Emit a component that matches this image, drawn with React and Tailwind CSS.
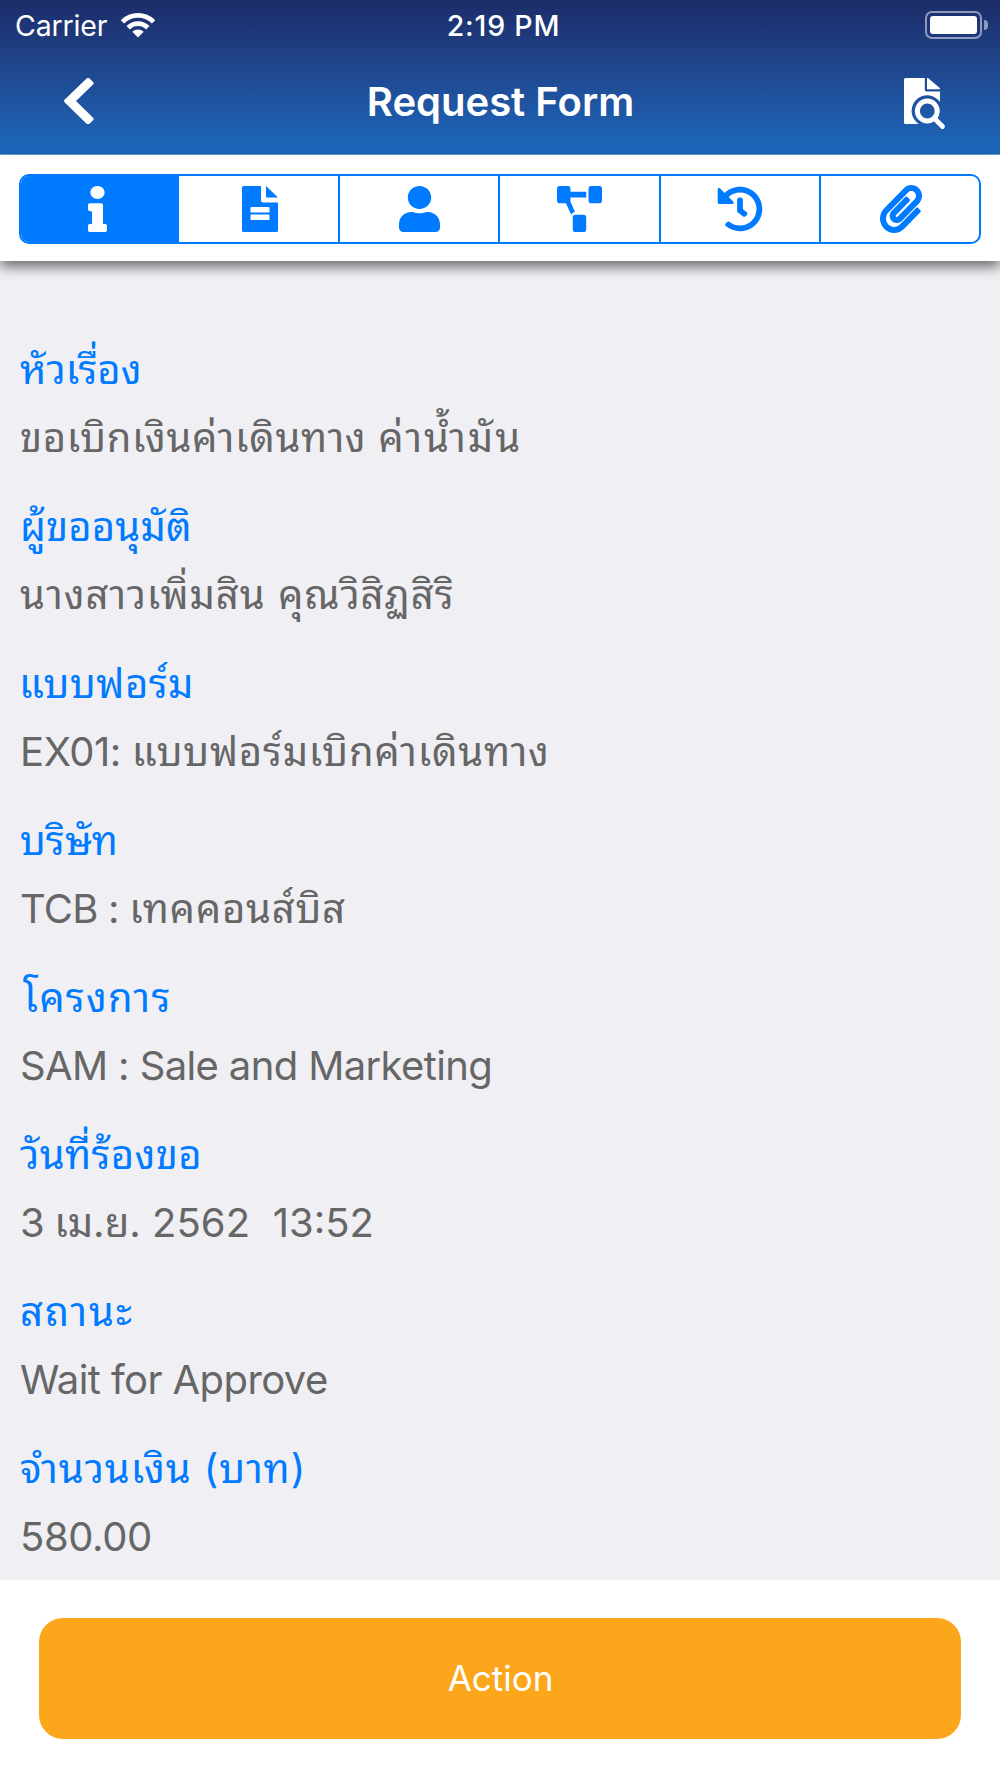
import { FaInfo, FaUser, FaProjectDiagram, FaHistory, FaPaperclip } from "react-icons/fa";

const fields = [
  {
    label: "หัวเรื่อง",
    prefix: "ขอเบิกเงินค่าเดินทาง ",
    prefixSpacing: "tracking-[0.65px]",
    value: "ค่าน้ำมัน",
    spacing: "tracking-[2px]",
  },
  { label: "ผู้ขออนุมัติ", labelSpacing: "tracking-[0.15px]", value: "นางสาวเพิ่มสิน คุณวิสิฏสิริ", spacing: "tracking-[0.95px]" },
  {
    label: "แบบฟอร์ม",
    labelSpacing: "-ml-px tracking-[0.5px]",
    prefix: "EX01: ",
    prefixSpacing: "tracking-[-0.4px]",
    value: "แบบฟอร์มเบิกค่าเดินทาง",
    spacing: "tracking-[0.78px]",
  },
  { label: "บริษัท", prefix: "TCB : ", prefixSpacing: "tracking-[-0.8px]", value: "เทคคอนส์บิส", spacing: "tracking-[0.75px]" },
  { label: "โครงการ", labelSpacing: "pl-[3px] tracking-[1.25px]", value: "SAM : Sale and Marketing", spacing: "tracking-[-0.63px]" },
  {
    label: "วันที่ร้องขอ",
    labelSpacing: "tracking-[0.4px]",
    prefix: "3 ",
    prefixSpacing: "tracking-[-0.9px]",
    value: "เม.ย. 2562  13:52",
    spacing: "tracking-[0.03px] [font-feature-settings:'calt'_1]",
  },
  { label: "สถานะ", labelSpacing: "tracking-[1.8px]", value: "Wait for Approve", spacing: "tracking-[-0.58px]" },
  { label: "จำนวนเงิน (บาท)", labelSpacing: "tracking-[0.9px]", value: "580.00", spacing: "tracking-[-0.4px]" },
];

function DocumentIcon({ className }) {
  return (
    <svg viewBox="0 0 36 46" fill="currentColor" className={className}>
      <path
        fillRule="evenodd"
        d="M1.5 0H19v14a2.5 2.5 0 0 0 2.5 2.5H36v28a1.5 1.5 0 0 1-1.5 1.5h-33A1.5 1.5 0 0 1 0 44.5V1.5A1.5 1.5 0 0 1 1.5 0ZM9.500 21a1 1 0 0 0-1 1v3.500a1 1 0 0 0 1 1h17a1 1 0 0 0 1-1V22a1 1 0 0 0-1-1ZM9.500 28.500a1 1 0 0 0-1 1V33a1 1 0 0 0 1 1h17a1 1 0 0 0 1-1v-3.500a1 1 0 0 0-1-1Z"
      />
      <path d="M24 0 36 11.500H24Z" />
    </svg>
  );
}

function DocumentSearchIcon({ className }) {
  return (
    <svg viewBox="0 0 42 52" fill="currentColor" className={className}>
      <path d="M1.5 0H20.800v11.700A1.800 1.800 0 0 0 22.600 13.500H36V24A15.600 15.600 0 1 0 14.700 46H1.500A1.500 1.500 0 0 1 0 44.500v-43A1.500 1.500 0 0 1 1.500 0Z" />
      <path d="M23 0h1L36 10.300v1H23Z" />
      <circle cx="23.300" cy="33" r="9.900" fill="none" stroke="currentColor" strokeWidth="5" />
      <path d="m31.500 41.500 7 7" stroke="currentColor" strokeWidth="4.800" strokeLinecap="round" />
    </svg>
  );
}

function WifiIcon({ className }) {
  return (
    <svg viewBox="0 0 34 25" fill="none" stroke="currentColor" className={className}>
      <path d="M1.400 8.900a22.100 22.100 0 0 1 31.200 0" strokeWidth="4.800" />
      <path d="M7.200 14.700a13.800 13.800 0 0 1 19.600 0" strokeWidth="4.800" />
      <path d="M11.300 18.800a8 8 0 0 1 11.400 0L17 24.500Z" fill="currentColor" stroke="none" />
    </svg>
  );
}

const tabs = [
  { id: "info", icon: <FaInfo className="h-[46px] w-[19px]" preserveAspectRatio="none" />, width: "w-[158px] pr-[5px]" },
  { id: "document", icon: <DocumentIcon className="h-[46px] w-9" />, width: "w-[159px] pl-[3px]" },
  { id: "user", icon: <FaUser className="h-[46px] w-[41px]" preserveAspectRatio="none" />, width: "w-[160px]" },
  { id: "flow", icon: <FaProjectDiagram className="h-[46px] w-[45px]" preserveAspectRatio="none" />, width: "w-[161px]" },
  { id: "history", icon: <FaHistory className="size-[46px]" />, width: "w-[160px]" },
  { id: "attachment", icon: <FaPaperclip className="h-12 w-[42px]" preserveAspectRatio="none" />, width: "flex-1 pl-0.5" },
];

function StatusBar() {
  return (
    <div className="grid h-[51px] grid-cols-3 items-center pl-[15px] pr-3">
      <div className="flex items-center gap-[14px]">
        <span className="text-[28.5px] leading-[50px] tracking-[-0.15px]">Carrier</span>
        <WifiIcon className="mb-px h-[25px] w-[34px]" />
      </div>
      <span className="pl-1 text-center text-[28.5px] font-medium leading-[50px] tracking-[0.8px]">2:19 PM</span>
      <div className="flex items-center justify-end gap-[2px] pb-[2px]">
        <div className="h-7 w-[57px] rounded-[7px] border-2 border-white/50 p-[3px]">
          <div className="h-full rounded-[3px] bg-white" />
        </div>
        <div className="h-[10px] w-1 rounded-r-full bg-white/50" />
      </div>
    </div>
  );
}

function Header() {
  return (
    <header className="h-[155px] border-b border-[#6ba3dc] bg-linear-to-b from-[#1c2c69] to-[#1c69be] text-white">
      <StatusBar />
      <div className="flex h-[103px] items-center justify-between pl-16 pr-[54px]">
        <svg viewBox="0 0 30 46" className="mb-[3px] h-[46px] w-[30px]" fill="currentColor">
          <path d="M22.300.7a2.500 2.500 0 0 1 3.500 0l3 3a2 2 0 0 1 0 3L12 23l16.800 16.500a2 2 0 0 1 0 3l-3 3a2.500 2.500 0 0 1-3.500 0L.8 24.500a2 2 0 0 1 0-3Z" />
        </svg>
        <h1 className="pb-px pl-[3px] text-[40px] font-semibold">Request Form</h1>
        <DocumentSearchIcon className="mt-[3px] h-[52px] w-[42px]" />
      </div>
    </header>
  );
}

export default function App() {
  return (
    <div className="flex h-[1778px] w-[1000px] flex-col overflow-hidden bg-[#efeff4] font-['Inter','Noto_Sans_Thai_Looped','Noto_Looped_Thai','Loma','Waree','Garuda','Umpush','Noto_Serif_Thai','Norasi','Kinnari','FreeSerif','Tahoma',serif]">
      <Header />

      <nav className="h-[106px] bg-white px-[19px] pt-[19px] shadow-[0_6px_12px_rgba(0,0,0,0.54)]">
        <div className="flex h-[70px] overflow-hidden rounded-[10px] border-2 border-[#007aff] text-[#007aff]">
          {tabs.map((tab, i) => (
            <button
              key={tab.id}
              className={`flex items-center justify-center ${tab.width} ${
                i === 0 ? "bg-[#007aff] text-white" : i === 1 ? "" : "border-l-2 border-[#007aff]"
              }`}
            >
              {tab.icon}
            </button>
          ))}
        </div>
      </nav>

      <main className="h-[1319px] overflow-hidden px-5 pt-[77px]">
        {fields.map((field) => (
          <div key={field.label} className="h-[157px] whitespace-pre text-[40px] leading-[64px] [font-feature-settings:'calt'_0]">
            <div className={`text-[#007aff] ${field.labelSpacing ?? ""}`}>{field.label}</div>
            <div className={`mt-1 text-[#666] ${field.spacing}`}>
              {field.prefix && <span className={field.prefixSpacing}>{field.prefix}</span>}
              {field.value}
            </div>
          </div>
        ))}
      </main>

      <footer className="flex-1 bg-white px-[39px] pt-[38px]">
        <button className="h-[121px] w-full rounded-[24px] bg-[#fca61c] pl-px text-[35px] text-white">Action</button>
      </footer>
    </div>
  );
}
